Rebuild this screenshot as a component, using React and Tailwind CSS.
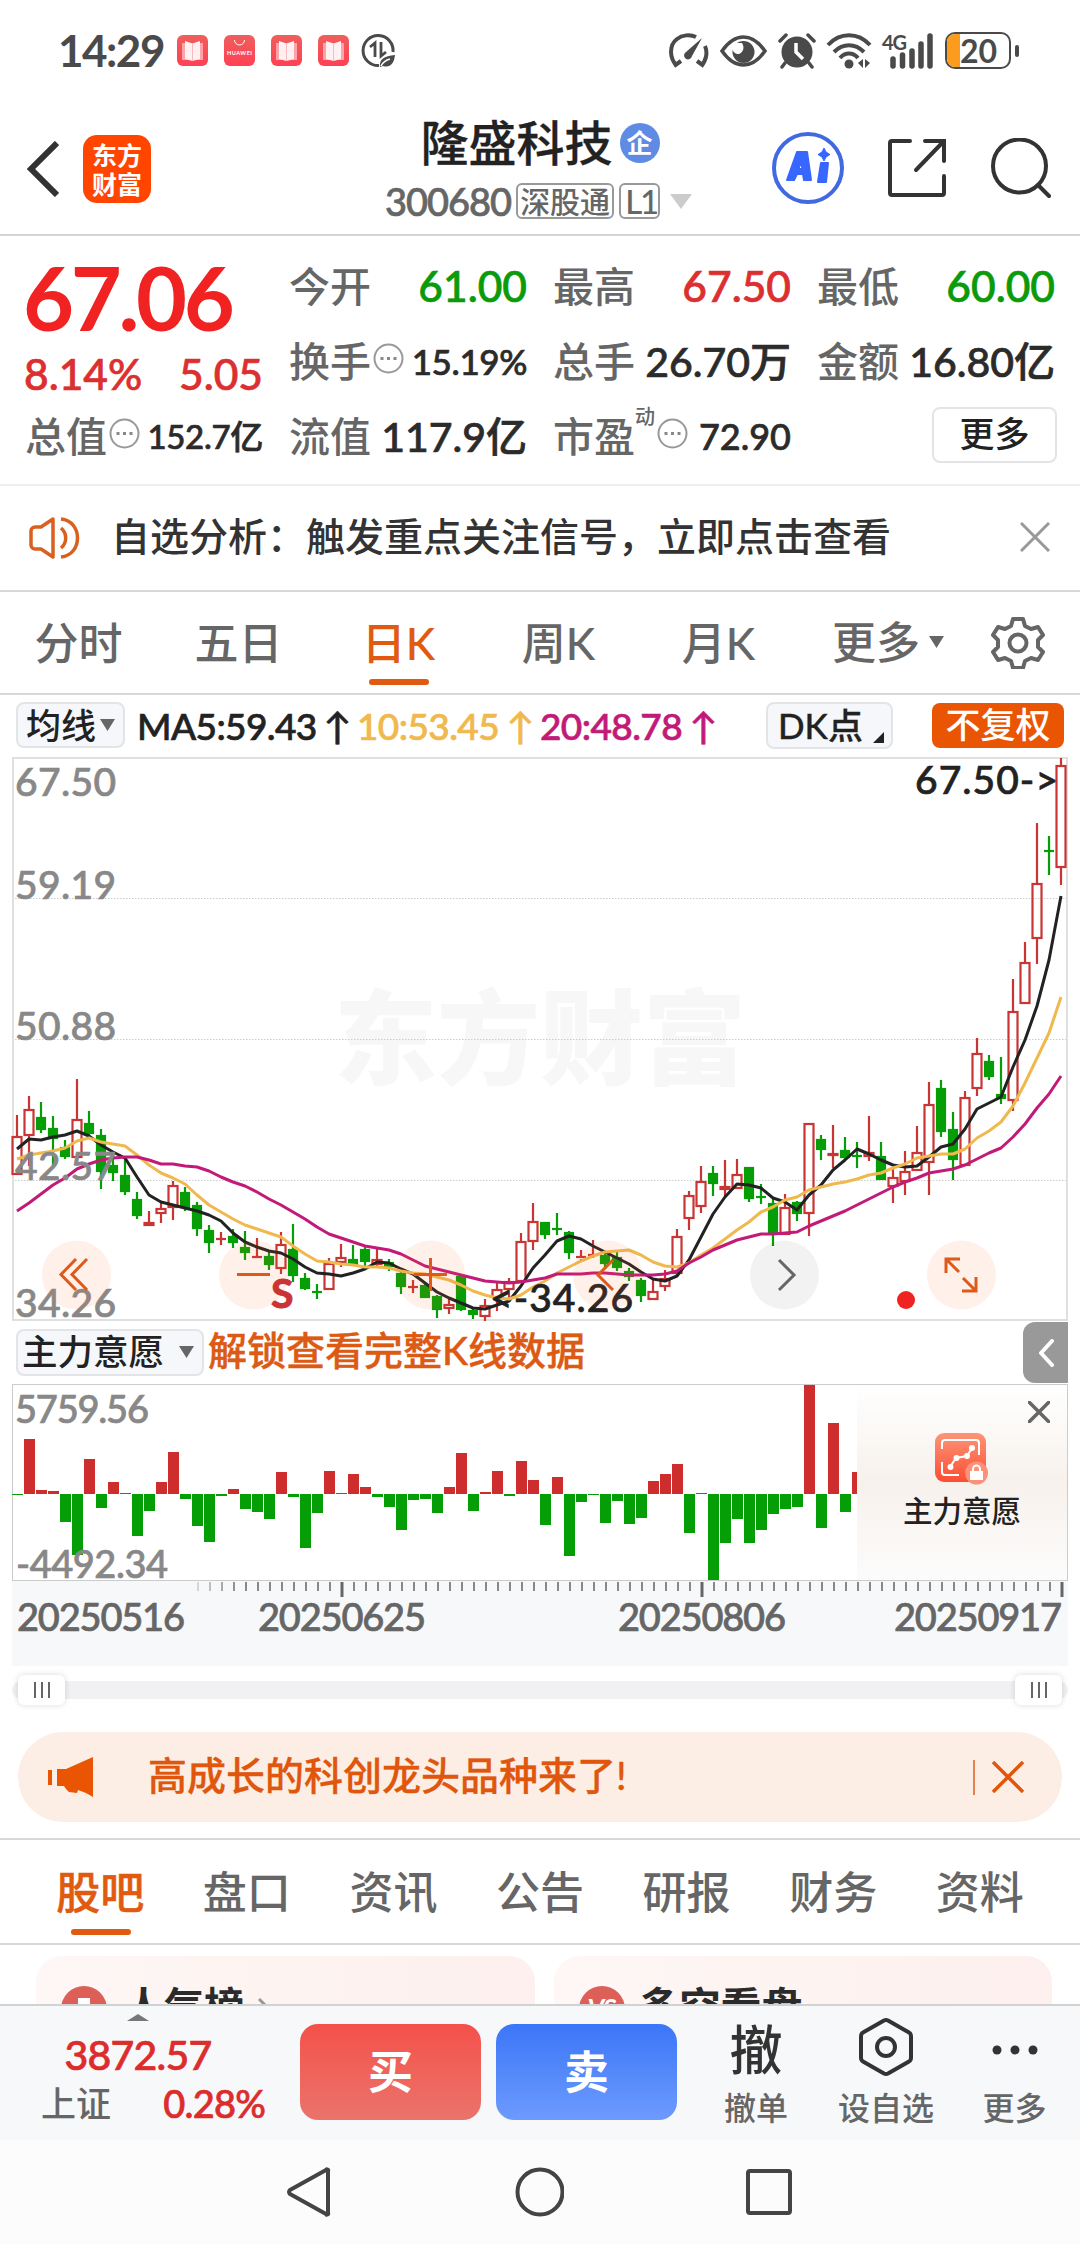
import React from 'react';
import clsx from 'clsx';

// [up?, high, body top, body bottom, low], measured from the top of the plot
const CANDLES = [
    [1, 357, 378, 417, 417], [1, 338, 351, 378, 408], [0, 344, 359, 372, 375], [0, 358, 370, 381, 407],
    [0, 382, 389, 399, 401], [1, 321, 361, 400, 400], [0, 353, 365, 376, 379], [0, 371, 377, 414, 431],
    [0, 400, 407, 415, 423], [0, 400, 417, 434, 437], [0, 434, 441, 458, 461], [1, 453, 464, 468, 468],
    [1, 445, 450, 456, 465], [1, 423, 427, 450, 462], [0, 429, 434, 450, 453], [0, 444, 447, 471, 478],
    [0, 467, 472, 485, 495], [1, 474, 481, 481, 487], [0, 471, 478, 485, 490], [0, 473, 489, 495, 502],
    [1, 480, 499, 501, 501], [0, 493, 498, 507, 512], [1, 474, 486, 511, 516], [0, 466, 491, 518, 524],
    [0, 515, 520, 531, 532], [0, 526, 534, 535, 541], [1, 500, 505, 532, 532], [1, 486, 499, 505, 509],
    [0, 487, 501, 507, 507], [0, 487, 491, 504, 508], [1, 491, 501, 507, 508], [0, 501, 504, 509, 513],
    [0, 512, 515, 529, 536], [1, 522, 529, 529, 535], [0, 525, 527, 540, 540], [0, 537, 538, 552, 560],
    [1, 539, 546, 551, 556], [0, 517, 518, 552, 553], [0, 550, 552, 557, 561], [1, 541, 547, 559, 563],
    [1, 524, 531, 540, 553], [1, 520, 523, 532, 540], [1, 475, 483, 524, 524], [1, 445, 463, 484, 492],
    [0, 464, 464, 477, 481], [0, 455, 471, 471, 477], [0, 473, 474, 495, 501], [1, 492, 499, 501, 503],
    [1, 482, 497, 497, 500], [0, 495, 497, 506, 511], [0, 492, 499, 510, 513], [0, 510, 513, 519, 523],
    [0, 520, 522, 538, 544], [1, 522, 533, 542, 542], [1, 512, 520, 529, 533], [1, 471, 478, 516, 519],
    [1, 433, 437, 461, 472], [1, 408, 423, 449, 455], [0, 408, 415, 426, 438], [1, 402, 428, 432, 438],
    [1, 401, 416, 431, 431], [0, 409, 409, 441, 444], [0, 426, 439, 440, 446], [0, 441, 445, 475, 488],
    [1, 436, 449, 477, 477], [0, 443, 444, 456, 463], [1, 365, 365, 456, 478], [0, 377, 381, 392, 402],
    [1, 367, 395, 398, 410], [0, 379, 392, 400, 401], [0, 384, 398, 398, 410], [1, 358, 394, 399, 403],
    [0, 384, 398, 422, 422], [1, 409, 419, 429, 445], [1, 393, 413, 424, 437], [1, 368, 394, 413, 413],
    [1, 324, 346, 405, 437], [0, 322, 330, 374, 379], [0, 354, 371, 402, 422], [1, 333, 339, 408, 408],
    [1, 280, 295, 331, 338], [0, 297, 303, 319, 322], [0, 299, 336, 341, 346], [1, 221, 253, 343, 353],
    [1, 184, 204, 246, 246], [1, 65, 125, 181, 206], [0, 78, 93, 93, 117], [1, 0, 7, 110, 127],
];

const MA5 = [391, 381, 382, 379, 377, 373, 378, 387, 394, 400, 419, 437, 444, 447, 450, 453, 457, 463, 475, 484, 489, 493, 495, 501, 509, 515, 516, 518, 515, 511, 504, 505, 511, 516, 525, 534, 540, 545, 550, 551, 547, 543, 528, 510, 497, 483, 478, 481, 488, 494, 500, 506, 514, 521, 523, 518, 502, 479, 456, 439, 426, 427, 430, 440, 444, 452, 437, 427, 412, 402, 391, 396, 402, 407, 409, 408, 399, 389, 386, 371, 351, 345, 339, 309, 282, 248, 202, 138];
const MA10 = [401, 397, 395, 393, 390, 383, 380, 384, 386, 388, 397, 407, 415, 420, 426, 437, 447, 454, 461, 467, 471, 475, 479, 488, 496, 503, 504, 506, 507, 509, 509, 510, 513, 515, 516, 519, 522, 527, 533, 537, 540, 541, 537, 529, 523, 515, 509, 503, 498, 494, 493, 492, 497, 504, 508, 509, 505, 497, 490, 481, 472, 464, 454, 449, 442, 439, 432, 429, 426, 424, 421, 417, 415, 410, 406, 400, 398, 396, 396, 391, 380, 373, 364, 348, 325, 300, 275, 239];
const MA20 = [453, 445, 436, 427, 420, 411, 406, 402, 400, 399, 399, 402, 406, 406, 408, 409, 413, 419, 424, 428, 434, 441, 447, 454, 461, 469, 476, 480, 484, 488, 490, 492, 496, 502, 508, 511, 514, 517, 520, 523, 524, 525, 524, 522, 520, 516, 516, 516, 515, 515, 516, 517, 517, 517, 516, 513, 505, 499, 492, 487, 482, 479, 476, 476, 475, 474, 468, 463, 458, 453, 447, 441, 435, 429, 424, 420, 415, 413, 411, 407, 401, 395, 390, 379, 366, 350, 336, 318];

const FLOWS = [-1, 55, 4, 3, -28, -61, 35, -14, 12, 1, -42, -17, 12, 42, -5, -32, -48, -2, 5, -15, -18, -25, 22, -3, -54, -19, 23, 1, 20, 7, -3, -13, -36, -6, -5, -19, 7, 41, -17, 2, 23, -2, 33, 14, -31, 17, -62, -8, -1, -29, -7, -30, -24, 13, 20, 30, -39, 1, -86, -49, -25, -49, -36, -20, -15, -13, 109, -34, 71, -18, 22];

const RED = '#c93434';
const GREEN = '#069e06';

const xAt = (i) => 5 + i * 12;
const line = (values) => values.map((y, i) => `${xAt(i)},${y}`).join(' ');

const StatusBar = () => (
    <div className="h-[100px] flex items-center pl-[58px] pr-[62px] pt-[3px] text-[#4a4a4a]">
        <span className="w-[119px] text-[44px] font-bold leading-none tracking-[-1.5px] -mt-1">14:29</span>
        <div className="flex gap-4">
            {['book', 'shop', 'book', 'book'].map((kind, idx) => (
                <svg key={idx} className="-mt-0.5" width="31" height="31" viewBox="0 0 31 31">
                    <defs>
                        <linearGradient id={`app${idx}`} x1="0" y1="0" x2="0" y2="1">
                            <stop offset="0" stopColor="#ee5f5c" />
                            <stop offset="1" stopColor="#ff4054" />
                        </linearGradient>
                    </defs>
                    <rect width="31" height="31" rx="6" fill={`url(#app${idx})`} />
                    {kind === 'book' ? (
                        <g>
                            <path d="M5 8h21v17H5z" fill="#fba5a8" />
                            <path d="M8 6l7.500 2.500L23 6v18l-7.500 2L8 24z" fill="#fff0f1" />
                            <path d="M15.500 8v18" stroke="#fbb9bc" strokeWidth="1" />
                        </g>
                    ) : (
                        <g>
                            <path d="M10.500 5a5 5 0 0 0 10 0" fill="none" stroke="#fff" strokeWidth="1" />
                            <text x="3" y="20" fontSize="5.500" fontWeight="700" fill="#fff" textLength="25">HUAWEI</text>
                        </g>
                    )}
                </svg>
            ))}
        </div>
        <svg className="ml-3 -mt-0.5" width="35" height="35" viewBox="0 0 35 35" fill="none" stroke="currentColor" strokeWidth="3">
            <path d="M18 32.500A15 15 0 1 1 32 19" />
            <path d="M9 14l5-4v14M20 9v14l5-4" strokeWidth="2.800" />
            <path d="M19 34c-1-8 4-11 15-12-1 9-5 13-12 11z" fill="currentColor" stroke="none" />
            <path d="M20 33c2-4 5-6 9-7" stroke="#fff" strokeWidth="1.500" />
        </svg>

        <div className="ml-auto flex items-center -mt-0.5 translate-x-px">
            <svg width="40" height="36" viewBox="0 0 40 36" fill="none" stroke="currentColor" strokeWidth="4">
                <path d="M8 33C0 25 0 12 8 6c5-4 13-5 19-2M36 13c3 7 1 15-4 20M5 33l7-5M35 33l-7-5" />
                <path d="M33 5L23 23a4 4 0 1 1-6-4z" fill="currentColor" stroke="none" />
            </svg>
            <svg className="ml-[11px]" width="47" height="34" viewBox="0 0 47 34">
                <path d="M2 17C9 7 16 3 23.500 3S38 7 45 17c-7 10-14 14-21.500 14S9 27 2 17z" fill="none" stroke="currentColor" strokeWidth="3.500" />
                <circle cx="23.500" cy="18" r="11" fill="currentColor" />
                <path d="M13 9h9c3 5 1 9-3 11-4 0-6-2-7-6z" fill="#fff" />
            </svg>
            <svg className="ml-[11px]" width="38" height="36" viewBox="0 0 38 36">
                <circle cx="19" cy="19" r="15.500" fill="currentColor" />
                <path d="M2 8l6-6M36 8l-6-6M7 30l-3 4M31 30l3 4" stroke="currentColor" strokeWidth="3.500" strokeLinecap="round" />
                <path d="M18 10v9l7 7" fill="none" stroke="#fff" strokeWidth="3.500" />
            </svg>
            <svg className="ml-[10px]" width="46" height="36" viewBox="0 0 46 36" fill="none" stroke="currentColor" strokeWidth="4">
                <path d="M2 12C14-1 32-1 44 12M8 19c9-9 21-9 30 0M14 25c5-6 13-6 18 0" />
                <circle cx="23" cy="31" r="4.500" fill="currentColor" stroke="none" />
                <path d="M32 30l5-4v9zM44 30l-5-4v9z" fill="currentColor" stroke="none" />
            </svg>
            <svg className="ml-[10px] overflow-visible" width="52" height="36" viewBox="0 0 52 36">
                <path d="M11 26v7M20.500 22v11M30 18v15M39 11v22M48 3v30" stroke="currentColor" strokeWidth="5.500" strokeLinecap="round" />
                <text x="0" y="17" fontSize="20" fontWeight="700" fill="currentColor" textLength="25">4G</text>
            </svg>
            <div className="ml-[11px] w-[66px] h-[37px] rounded-[10px] border-2 border-[#4a4a4a] overflow-hidden flex">
                <div className="w-[13px] bg-[#fc9c1e]"></div>
                <span className="text-[32px] font-bold leading-[33px]">20</span>
            </div>
            <div className="ml-1 w-1 h-3 rounded bg-[#4a4a4a]"></div>
        </div>
    </div>
);

const Header = () => (
    <div className="h-[136px] border-b-2 border-[#d4d4d4] grid grid-cols-[1fr_auto_1fr] items-center">
        <div className="flex items-center pl-[27px] pt-[3px]">
            <svg width="32" height="56" viewBox="0 0 32 56" fill="none" stroke="#333" strokeWidth="6">
                <path d="M30 2L4 28l26 26" />
            </svg>
            <div className="ml-6 size-[68px] rounded-[14px] bg-[#ff4500] text-white text-[25px] leading-[29px] font-bold flex flex-col items-center justify-center font-['Noto_Sans_CJK_SC',sans-serif]">
                <span>东方</span>
                <span>财富</span>
            </div>
        </div>
        <div className="flex flex-col items-center pt-0.5">
            <div className="flex items-center gap-[7px] h-[66px] pt-0.5">
                <h1 className="text-[48px] leading-none font-medium text-[#222] [-webkit-text-stroke:0.3px]">隆盛科技</h1>
                <span className="size-10 rounded-full bg-[#5f8be4] text-white text-[26px] leading-none font-bold flex items-center justify-center">企</span>
            </div>
            <div className="flex items-center gap-[5px] h-[52px] pr-0.5 text-[#666]">
                <span className="text-[38px] leading-none tracking-[-1px] [-webkit-text-stroke:0.7px]">300680</span>
                <span className="h-9 px-0.5 border-2 border-[#999] rounded-md text-[30px] leading-[32px]">深股通</span>
                <span className="h-9 px-1 border-2 border-[#999] rounded-md text-[33px] leading-[32px] w-[41px] tracking-[-2px]">L1</span>
                <svg className="ml-1" width="24" height="15" viewBox="0 0 24 15"><path d="M1 0h22L12 15z" fill="#ccc" /></svg>
            </div>
        </div>
        <div className="flex items-center justify-end pr-[29px] pt-[2px]">
            <svg width="72" height="72" viewBox="0 0 72 72">
                <circle cx="36" cy="36" r="34" fill="none" stroke="#4169e1" strokeWidth="4" />
                <g fill="#3767ff" stroke="#3767ff" strokeWidth="2" strokeLinejoin="round">
                    <path fillRule="evenodd" d="M25 20h10l4 28h-7l-1-6h-6l-3 6h-7zM29 29l-2.500 8h4z" />
                    <path d="M49 31h7l-2 19h-8z" />
                    <path d="M52 16l2 4 4 2.500-4 2.500-2 4-2-4-4-2.500 4-2.500z" strokeWidth="1" />
                </g>
            </svg>
            <svg className="ml-11" width="58" height="58" viewBox="0 0 58 58" fill="none" stroke="#333" strokeWidth="4" strokeLinecap="round">
                <path d="M22 2H4a2 2 0 0 0-2 2v50a2 2 0 0 0 2 2h50a2 2 0 0 0 2-2V37M37 2h19v20M55 3L28 31" />
            </svg>
            <svg className="ml-[45px]" width="60" height="60" viewBox="0 0 60 60" fill="none" stroke="#333" strokeWidth="4" strokeLinecap="round">
                <circle cx="28.500" cy="28" r="26.500" />
                <path d="M47 47l11 11" />
            </svg>
        </div>
    </div>
);

const DotsIcon = () => (
    <svg className="shrink-0" width="31" height="31" viewBox="0 0 31 31">
        <circle cx="15.500" cy="15.500" r="14" fill="none" stroke="#999" strokeWidth="2" />
        <path d="M7.500 15.500h3M14 15.500h3M20.500 15.500h3" stroke="#888" strokeWidth="3" />
    </svg>
);

const Stat = ({ label, value, color = 'text-[#2b2b2b]', dots, sup, size = 'text-[42.5px]' }) => (
    <div className="flex items-center h-[75px] leading-none whitespace-nowrap">
        <span className="text-[41px] text-[#666] -mt-px">{label}</span>
        {sup && <span className="text-[20px] text-[#666] self-start pt-[7px]">{sup}</span>}
        {dots && <span className="ml-0.5 mb-1.5"><DotsIcon /></span>}
        <span className={clsx('ml-auto -mt-px [-webkit-text-stroke:0.7px]', size, color)}>{value}</span>
    </div>
);

const Quote = () => (
    <div className="h-[250px] border-b-2 border-[#eee] px-[25px] grid grid-cols-4 gap-x-[26px] content-start pt-[13px]">
        <div className="h-[150px] text-[#dc2f2f] leading-none">
            <p className="text-[88px] font-bold text-[#f02222] h-[100px] leading-[97px] tracking-[-3.3px] -ml-0.5">67.06</p>
            <p className="text-[42.5px] flex justify-between h-[50px] leading-[50px] [-webkit-text-stroke:0.7px]">
                <span className="-ml-px">8.14%</span>
                <span>5.05</span>
            </p>
        </div>
        <div>
            <Stat label="今开" value="61.00" color="text-[#0a9a0a]" />
            <Stat label="换手" value="15.19%" dots size="text-[35px] tracking-[-0.4px]" />
        </div>
        <div>
            <Stat label="最高" value="67.50" color="text-[#dc2f2f]" />
            <Stat label="总手" value="26.70万" size="text-[41px]" />
        </div>
        <div>
            <Stat label="最低" value="60.00" color="text-[#0a9a0a]" />
            <Stat label="金额" value="16.80亿" size="text-[41px]" />
        </div>
        <Stat label="总值" value="152.7亿" dots size="text-[33px] tracking-[-0.3px]" />
        <Stat label="流值" value="117.9亿" size="text-[41px]" />
        <Stat label="市盈" value="72.90" dots sup="动" size="text-[36px]" />
        <div className="flex justify-end items-center -mr-0.5">
            <button className="w-[125px] h-[56px] border-2 border-[#e4e4e6] rounded-lg text-[35px] leading-none text-[#222] pb-1 -mt-[3px]">更多</button>
        </div>
    </div>
);

const Notice = () => (
    <div className="h-[106px] border-b-2 border-[#d8d8d8] flex items-center pl-[29px] pr-[30px]">
        <svg width="54" height="44" viewBox="0 0 54 44" fill="none" stroke="#d9601f" strokeWidth="3.500">
            <path d="M24 3L12 11H6a4 4 0 0 0-4 4v14a4 4 0 0 0 4 4h6l12 8z" strokeLinejoin="round" />
            <path d="M32 12a13 13 0 0 1 0 20M32 3c22 2 22 36 0 38" />
        </svg>
        <p className="ml-[28px] -mt-1 text-[39px] leading-none text-[#333]">自选分析：触发重点关注信号，立即点击查看</p>
        <svg className="ml-auto -mt-0.5" width="30" height="30" viewBox="0 0 30 30" stroke="#999" strokeWidth="3">
            <path d="M1 1l28 28M29 1L1 29" />
        </svg>
    </div>
);

const PeriodTabs = () => (
    <div className="h-[103px] border-b-2 border-[#d8d8d8] flex text-[44px] leading-none text-[#666]">
        {['分时', '五日', '日K', '周K', '月K'].map(tab => (
            <div key={tab} className={clsx('w-[160px] flex flex-col items-center pt-[29px] pr-[3px]', tab === '日K' && 'text-[#e05a10]')}>
                <span>{tab}</span>
                {tab === '日K' && <span className="mt-[14px] w-[60px] h-1.5 rounded-full bg-[#e05a10]"></span>}
            </div>
        ))}
        <div className="ml-[32px] flex items-center gap-[9px] h-[99px]">
            <span>更多</span>
            <svg width="15" height="12" viewBox="0 0 15 12"><path d="M0 0h15L7.500 12z" fill="#666" /></svg>
        </div>
        <svg className="ml-auto mr-[35px] mt-[25px]" width="54" height="52" viewBox="0 0 54 52" fill="none" stroke="#666" strokeWidth="4" strokeLinejoin="round">
            <path d="M22 2h10l2 7 6 3 7-2 5 8-5 5v7l5 5-5 8-7-2-6 3-2 7H22l-2-7-6-3-7 2-5-8 5-5v-7l-5-5 5-8 7 2 6-3z" />
            <circle cx="27" cy="26" r="8.500" />
        </svg>
    </div>
);

const averages = [
    { value: 'MA5:59.43', className: 'w-[220px] text-[#222]' },
    { value: '10:53.45', className: 'w-[183px] text-[#f0b94e]' },
    { value: '20:48.78', className: 'w-[183px] text-[#c21a78]' },
];

const Averages = () => (
    <div className="h-[63px] flex items-center pl-4 pr-4 pb-[3px] text-[37px] leading-none text-[#222] whitespace-nowrap">
        <div className="w-[109px] h-[46px] rounded-lg border-2 border-[#e2e4e8] bg-[#f6f7fa] flex items-center justify-center gap-1 text-[35px]">
            <span>均线</span>
            <svg width="15" height="12" viewBox="0 0 15 12"><path d="M0 0h15L7.500 12z" fill="#666" /></svg>
        </div>
        <div className="ml-3 flex tracking-[-0.6px] [-webkit-text-stroke:0.7px]">
            {averages.map(ma => (
                <span key={ma.value} className={clsx('flex justify-between pr-1.5', ma.className)}>
                    <span>{ma.value}</span>
                    <span>↑</span>
                </span>
            ))}
        </div>
        <div className="ml-auto w-[127px] h-[47px] rounded-lg border-2 border-[#e2e4e8] bg-[#f6f7fa] flex items-center pl-2.5 text-[35px]">
            <span className="[-webkit-text-stroke:0.3px]">DK点</span>
            <svg className="ml-2.5 self-end mb-1" width="11" height="11" viewBox="0 0 11 11"><path d="M11 0v11H0z" fill="#222" /></svg>
        </div>
        <div className="ml-[39px] w-[132px] h-[45px] pb-0.5 rounded-lg bg-[#ea5504] text-white text-[35px] flex items-center justify-center">不复权</div>
    </div>
);

const KLineChart = () => (
    <svg className="block mx-3 overflow-visible" width="1056" height="563" viewBox="0 0 1056 563">
        <text x="322" y="319" fontSize="103" fontWeight="900" fill="#f7f7f7" textLength="412">东方财富</text>
        {[140, 281, 422].map(y => (
            <path key={y} d={`M0 ${y}.500H1056`} stroke="#ccc" strokeDasharray="1.500 1.500" />
        ))}
        <rect x="1" y="0" width="1054" height="562" fill="none" stroke="#e0e0e0" strokeWidth="2" />

        {CANDLES.map(([up, high, top, bottom, low], i) => (
            <g key={i} stroke={up ? RED : GREEN} strokeWidth="2.200">
                <path d={`M${xAt(i)} ${high}V${top}M${xAt(i)} ${bottom}V${low}`} />
                {bottom - top < 3 ? (
                    <path d={`M${xAt(i) - 5} ${top}H${xAt(i) + 5}`} />
                ) : (
                    <rect
                        x={xAt(i) - (up ? 4.5 : 4)}
                        y={top + 1}
                        width={up ? 9 : 8}
                        height={bottom - top - 2}
                        fill={up ? 'none' : GREEN}
                    />
                )}
            </g>
        ))}
        <g fill="none" strokeWidth="3" strokeLinejoin="round">
            <polyline points={line(MA5)} stroke="#222" />
            <polyline points={line(MA10)} stroke="#f0b94e" />
            <polyline points={line(MA20)} stroke="#c21a78" />
        </g>

        <g fontSize="39" fill="#888" stroke="#888" strokeWidth="0.700">
            <text x="3" y="38" textLength="101">67.50</text>
            <text x="3" y="141" textLength="101">59.19</text>
            <text x="3" y="282" textLength="101">50.88</text>
            <text x="3" y="422" textLength="101">42.57</text>
            <text x="3" y="559" textLength="101">34.26</text>
        </g>
        <g fontSize="39" fill="#222" stroke="#222" strokeWidth="0.700">
            <text x="903" y="36" textLength="143">67.50-&gt;</text>
            <text x="478" y="554" textLength="143">&lt;-34.26</text>
        </g>

        {[64, 241, 418, 595, 772, 949].map(cx => (
            <circle key={cx} cx={cx + 0.5} cy="517" r="34.500" fill={cx === 772 ? '#000' : '#fb6a2a'} opacity={cx === 772 ? 0.05 : 0.1} />
        ))}
        <g fill="none" stroke="#dd5a1a" strokeWidth="3">
            <path d="M64 501L49 516.500l15 15.500M75 501L60 516.500l15 15.500" />
            <path d="M225 516.500h33M402 516.500h33M418.500 500v33M601 502l-15 15 15 15" />
            <path d="M934 515v-14h14M935 502l12 12M964 519v14h-14M963 532l-12-12" />
            <path d="M767 502l15 15-15 15" stroke="#666" />
        </g>
        <text x="259" y="550" fontSize="41" fontWeight="700" fill={RED} stroke={RED}>S</text>
        <circle cx="894" cy="542" r="9" fill="#f02222" />
    </svg>
);

const SubChartBar = () => (
    <div className="h-[63px] flex items-center pl-4 pr-3 whitespace-nowrap leading-none">
        <div className="w-[188px] h-[47px] pb-0.5 rounded-lg border-2 border-[#e2e4e8] bg-[#f6f7fa] flex items-center gap-[15px] pl-1 text-[35.5px] text-[#222]">
            <span>主力意愿</span>
            <svg width="15" height="12" viewBox="0 0 15 12"><path d="M0 0h15L7.500 12z" fill="#666" /></svg>
        </div>
        <span className="ml-1 -mt-1 text-[39px] text-[#dc5a14] [-webkit-text-stroke:0.4px]">解锁查看完整K线数据</span>
        <div className="ml-auto w-[45px] h-[61px] rounded-l-xl bg-[#999] flex items-center justify-center">
            <svg width="16" height="28" viewBox="0 0 16 28" fill="none" stroke="#fff" strokeWidth="4" strokeLinecap="round" strokeLinejoin="round">
                <path d="M14 2L3 14l11 12" />
            </svg>
        </div>
    </div>
);

const FlowChart = () => (
    <div className="relative mx-3 h-[197px] border border-[#ccc]">
        <svg className="block -m-px overflow-visible" width="1056" height="197" viewBox="0 0 1056 197">
            {FLOWS.map((v, i) => (
                <rect
                    key={i}
                    x={xAt(i) - 5}
                    y={v > 0 ? 110 - v : 110}
                    width={i === 70 ? 5 : 11}
                    height={Math.abs(v)}
                    fill={v > 0 ? '#cd2d2d' : GREEN}
                />
            ))}
            <g fontSize="38" fill="#888" stroke="#888" strokeWidth="0.700">
                <text x="3" y="39" textLength="134">5759.56</text>
                <text x="4" y="194" textLength="152">-4492.34</text>
            </g>
        </svg>
        <div className="absolute right-0 top-0 w-[210px] h-[195px] bg-linear-to-b from-white via-[#f7f1ec] to-[#fcfcfc] flex flex-col items-center">
            <svg className="absolute right-[17px] top-4" width="22" height="22" viewBox="0 0 22 22" stroke="#666" strokeWidth="3.500">
                <path d="M0 0l22 22M22 0L0 22" />
            </svg>
            <svg className="mt-12" width="54" height="52" viewBox="0 0 54 52">
                <defs>
                    <linearGradient id="flow" x1="0" y1="0" x2="0" y2="1">
                        <stop offset="0" stopColor="#fc9578" />
                        <stop offset="1" stopColor="#fd4d33" />
                    </linearGradient>
                </defs>
                <rect width="51" height="49" rx="9" fill="url(#flow)" />
                <g fill="none" stroke="#fff" strokeWidth="2">
                    <path d="M7 16V10a3 3 0 0 1 3-3h31a3 3 0 0 1 3 3v12M7 29v10a3 3 0 0 0 3 3h14M15 34l6-9 11-2 5-8" />
                </g>
                <g fill="#fff">
                    <circle cx="15.500" cy="34" r="3" />
                    <circle cx="21.500" cy="25" r="3" />
                    <circle cx="32" cy="23" r="3" />
                    <circle cx="37" cy="15" r="3" />
                </g>
                <circle cx="41.500" cy="40" r="11.500" fill="#fc9078" />
                <path d="M35 38h13v9H35z" fill="#fff" />
                <path d="M38 38v-2a3.500 3.500 0 0 1 7 0v2" fill="none" stroke="#fff" strokeWidth="2" />
            </svg>
            <span className="mt-[11px] text-[29.5px] leading-none text-[#222]">主力意愿</span>
        </div>
    </div>
);

const DateAxis = () => {
    const ticks = Array.from({ length: 73 }, (_, k) => k);
    return (
        <svg className="block mx-3 bg-[#f7f8fa]" width="1056" height="85" viewBox="0 0 1056 85">
            {ticks.map(k => {
                const major = k % 30 === 12;
                return (
                    <path
                        key={k}
                        d={`M${186 + k * 12} 1v${major ? 15 : 9}`}
                        stroke={major ? '#666' : '#888'}
                        strokeWidth={major ? 3 : 2}
                        opacity={k < 4 ? 0.3 + k * 0.2 : 1}
                    />
                );
            })}
            <g fontSize="38" fill="#666" stroke="#666" strokeWidth="0.700">
                <text x="5" y="50" textLength="168">20250516</text>
                <text x="246" y="50" textLength="168">20250625</text>
                <text x="606" y="50" textLength="168">20250806</text>
                <text x="882" y="50" textLength="168">20250917</text>
            </g>
        </svg>
    );
};

const Handle = () => (
    <div className="w-[47px] h-[30px] rounded-md bg-white shadow-[0_0_6px_rgba(0,0,0,0.15)] flex items-center justify-center gap-[5px]">
        <span className="w-[2px] h-4 bg-[#666]"></span>
        <span className="w-[2px] h-4 bg-[#666]"></span>
        <span className="w-[2px] h-4 bg-[#666]"></span>
    </div>
);

const RangeSlider = () => (
    <div className="mx-3 mt-[15px] h-[18px] rounded-full bg-[#f1f1f4] flex items-center justify-between px-1.5">
        <Handle />
        <Handle />
    </div>
);

const Promo = () => (
    <div className="mx-[18px] mt-[33px] h-[90px] rounded-full bg-[#fceee5] flex items-center pl-[30px] pr-[38px] text-[#e0560c]">
        <svg width="46" height="40" viewBox="0 0 46 40" fill="#ea5504">
            <path d="M0 13h4v15H0zM9 12h9L45 0v40l-7-4-8-3-1 3-8-1-3-3-2-3H9z" />
        </svg>
        <span className="ml-[54px] -mt-1 text-[39px] leading-none [-webkit-text-stroke:0.3px]">高成长的科创龙头品种来了!</span>
        <span className="ml-auto w-0.5 h-[35px] bg-[#e3834e]"></span>
        <svg className="ml-[17px]" width="32" height="32" viewBox="0 0 32 32" stroke="#e0560c" strokeWidth="3.500">
            <path d="M1 1l30 30M31 1L1 31" />
        </svg>
    </div>
);

const InfoTabs = () => (
    <div className="mt-4 h-[107px] border-y-2 border-[#d8d8d8] flex px-[27px] text-[44px] leading-none text-[#666]">
        {['股吧', '盘口', '资讯', '公告', '研报', '财务', '资料'].map((tab, idx) => (
            <div key={tab} className={clsx('flex-1 flex flex-col items-center pt-[30px]', idx === 0 && 'text-[#e05a10]')}>
                <span className={clsx(idx === 0 && '[-webkit-text-stroke:0.5px]')}>{tab}</span>
                {idx === 0 && <span className="mt-[15px] w-[60px] h-1.5 rounded-full bg-[#e05a10] translate-x-px"></span>}
            </div>
        ))}
    </div>
);

const Cards = () => (
    <div className="h-[59px] overflow-hidden flex gap-[19px] px-9 pt-[11px] pr-7">
        <div className="flex-1 h-[120px] rounded-[26px] bg-linear-to-r from-[#fef7f5] to-[#fdf0ee] flex items-start pt-[30px] pl-[25px] text-[#2b2b2b] text-[40px] font-bold leading-none">
            <svg width="46" height="46" viewBox="0 0 46 46">
                <circle cx="23" cy="23" r="23" fill="#dc5f58" />
                <path d="M17 12h12v22H17z" fill="#fff" />
            </svg>
            <span className="ml-[17px]">人气榜</span>
            <svg className="ml-[14px] mt-3" width="14" height="24" viewBox="0 0 14 24" fill="none" stroke="#999" strokeWidth="3"><path d="M1 1l11 11L1 23" /></svg>
        </div>
        <div className="flex-1 h-[120px] rounded-[26px] bg-linear-to-r from-[#fef7f5] to-[#fdf0ee] flex items-start pt-[30px] pl-[25px] text-[#2b2b2b] text-[41px] font-bold leading-none">
            <span className="size-[46px] rounded-full bg-[#dc5f58] text-white text-[26px] italic leading-[44px] text-center tracking-[-1px]">VS</span>
            <span className="ml-[14px]">多空看盘</span>
        </div>
    </div>
);

const TradeBar = () => (
    <div className="h-[136px] border-t-2 border-[#d0d2d4] bg-[#f6f8fa] flex leading-none whitespace-nowrap">
        <div className="w-[276px] flex flex-col items-center pt-2">
            <svg width="22" height="7" viewBox="0 0 22 7"><path d="M11 0l11 7H0z" fill="#777" /></svg>
            <span className="mt-[13px] text-[41px] text-[#dc2c2c] tracking-[-0.8px] [-webkit-text-stroke:0.7px]">3872.57</span>
            <div className="mt-[9px] w-full flex justify-between items-center pl-[41px] pr-[11px]">
                <span className="text-[35px] text-[#666]">上证</span>
                <span className="text-[38px] text-[#dc2c2c] tracking-[-0.8px] [-webkit-text-stroke:0.7px]">0.28%</span>
            </div>
        </div>
        <button className="ml-6 mt-[18px] w-[181px] h-[96px] rounded-[18px] bg-linear-to-b from-[#f4504a] to-[#ea736b] text-white text-[45px] font-bold">买</button>
        <button className="ml-[15px] mt-[18px] w-[181px] h-[96px] rounded-[18px] bg-linear-to-b from-[#3b76f8] to-[#6d9afd] text-white text-[45px] font-bold">卖</button>
        <div className="ml-[29px] w-[100px] pt-[17px] flex flex-col items-center text-[32px] text-[#666]">
            <span className="text-[53px] text-[#333]">撤</span>
            <span className="mt-[16px]">撤单</span>
        </div>
        <div className="w-[160px] pt-[11px] flex flex-col items-center text-[32px] text-[#666]">
            <svg width="56" height="60" viewBox="0 0 56 60" fill="none" stroke="#333" strokeWidth="4" strokeLinejoin="round">
                <path d="M26 3.500q2-1 4 0l21 12q2 1 2 4v21q0 3-2 4l-21 12q-2 1-4 0l-21-12q-2-1-2-4v-21q0-3 2-4z" />
                <circle cx="28" cy="30" r="9" />
            </svg>
            <span className="mt-[15px]">设自选</span>
        </div>
        <div className="w-[97px] pt-[39px] flex flex-col items-center text-[32px] text-[#666]">
            <svg width="48" height="10" viewBox="0 0 48 10" fill="#333">
                <circle cx="6" cy="5" r="4.500" />
                <circle cx="24" cy="5" r="4.500" />
                <circle cx="42" cy="5" r="4.500" />
            </svg>
            <span className="mt-[37px]">更多</span>
        </div>
    </div>
);

const NavBar = () => (
    <div className="h-[104px] bg-[#fcfcfc] flex items-center pl-[286px] pr-[288px] justify-between">
        <svg width="46" height="50" viewBox="0 0 46 50" fill="none" stroke="#444" strokeWidth="4" strokeLinejoin="round">
            <path d="M42 4v42a1 1 0 0 1-2 1L4 27q-2-2 0-4L40 3a1 1 0 0 1 2 1z" />
        </svg>
        <svg width="50" height="50" viewBox="0 0 50 50" fill="none" stroke="#444" strokeWidth="4">
            <circle cx="26" cy="25" r="22.500" />
        </svg>
        <svg width="46" height="46" viewBox="0 0 46 46" fill="none" stroke="#444" strokeWidth="4">
            <rect x="2" y="2" width="42" height="42" rx="2" />
        </svg>
    </div>
);

const App = () => {
    return (
        <div className="w-[1080px] h-[2244px] overflow-hidden bg-white font-medium font-[Lato,'Noto_Sans_CJK_SC',sans-serif]">
            <StatusBar />
            <Header />
            <Quote />
            <Notice />
            <PeriodTabs />
            <Averages />
            <KLineChart />
            <SubChartBar />
            <FlowChart />
            <DateAxis />
            <RangeSlider />
            <Promo />
            <InfoTabs />
            <Cards />
            <TradeBar />
            <NavBar />
        </div>
    );
};

export default App;
